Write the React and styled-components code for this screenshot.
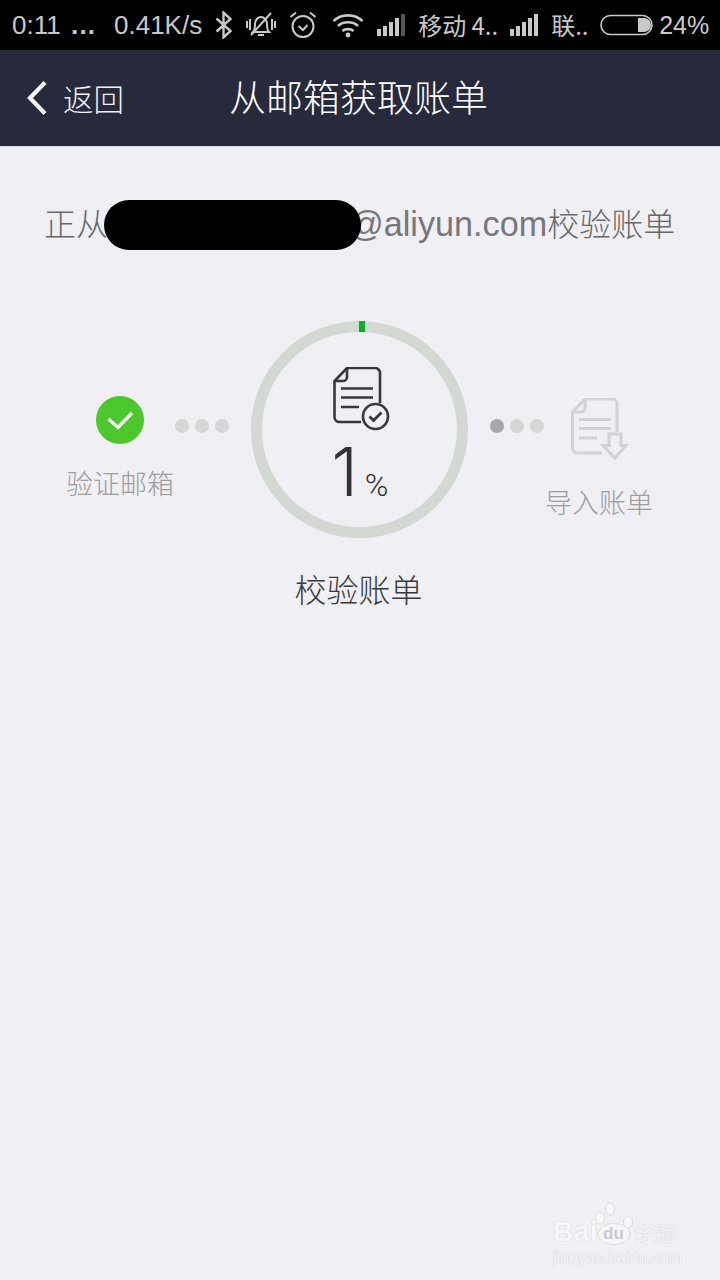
import React from "react";
import styled, { createGlobalStyle } from "styled-components";

const CJK = `"Noto Sans CJK SC", "Liberation Sans", sans-serif`;
const LATIN = `"Liberation Sans", "Noto Sans CJK SC", sans-serif`;

const Global = createGlobalStyle`
  html, body { margin: 0; padding: 0; background: #efeff4; }
  * { box-sizing: border-box; }
`;

const Page = styled.div`
  position: relative;
  width: 720px;
  height: 1280px;
  overflow: hidden;
  background: #efeff4;
  display: flex;
  flex-direction: column;
`;

const StatusBar = styled.div`
  height: 50px;
  background: #000;
  color: #c9c9c9;
  display: flex;
  align-items: center;
  padding-left: 12px;
  font: 26px/50px ${LATIN};
  white-space: nowrap;
`;

const StatusItem = styled.span`
  display: flex;
  align-items: center;
  margin-left: ${(p) => p.$gap || 0}px;
  width: ${(p) => (p.$w ? `${p.$w}px` : "auto")};
  font-family: ${(p) => (p.$cjk ? CJK : LATIN)};
  font-size: ${(p) => p.$size || 26}px;
  line-height: ${(p) => (p.$cjk ? 46 : 50)}px;
  height: 50px;
`;

const MoreDots = styled(StatusItem)`
  font-weight: 700;
  letter-spacing: 1.2px;
`;

const NavBar = styled.div`
  height: 97px;
  background: #272a3c;
  border-bottom: 1px solid #dcdce0;
  display: grid;
  grid-template-columns: 1fr auto 1fr;
  align-items: center;
  color: #fff;
  font-family: ${CJK};
  font-weight: 300;
`;

const Back = styled.div`
  display: flex;
  align-items: center;
  gap: 15px;
  padding-left: 26px;
  font-size: 30.5px;
  line-height: 44px;
  color: #f0f0f0;
`;

const Title = styled.div`
  font-size: 37px;
  line-height: 50px;
  margin: 0 3px 4px 0;
`;

const Message = styled.div`
  position: relative;
  margin: 52px 0 0 44px;
  height: 50px;
  font: 32px/46px ${CJK};
  font-weight: 300;
  color: #69696c;
  white-space: nowrap;
  display: flex;
`;

const Latin = styled.span`
  font-family: ${LATIN};
  font-size: 34.2px;
  line-height: 50px;
  color: #77777a;
`;

const Hidden = styled.span`
  display: block;
  width: 241px;
`;

const Redaction = styled.div`
  position: absolute;
  left: 60px;
  top: 1px;
  width: 257px;
  height: 50px;
  border-radius: 25px;
  background: #000;
`;

const Stepper = styled.div`
  margin-top: 72px;
  display: flex;
  align-items: flex-start;
  height: 290px;
`;

const Step = styled.div`
  width: 108px;
  margin-left: ${(p) => p.$left}px;
  padding-top: ${(p) => p.$top}px;
  display: flex;
  flex-direction: column;
  align-items: center;
`;

const StepLabel = styled.div`
  font: 300 27px/40px ${CJK};
  color: #9d9d9f;
  margin-top: ${(p) => p.$top}px;
  white-space: nowrap;
`;

const Dots = styled.div`
  display: flex;
  gap: 6px;
  margin-top: 98px;
  margin-left: ${(p) => p.$left}px;
`;

const Dot = styled.span`
  width: 14px;
  height: 14px;
  border-radius: 50%;
  background: ${(p) => (p.$on ? "#a8a8a8" : "#d6d6d8")};
`;

const Center = styled.div`
  width: 217px;
  margin-left: ${(p) => p.$left}px;
  display: flex;
  flex-direction: column;
  align-items: center;
`;

const Ring = styled.div`
  position: relative;
  width: 217px;
  height: 217px;
  border: 11px solid #d3d8d2;
  border-radius: 50%;
  display: flex;
  flex-direction: column;
  align-items: center;
  padding: 35px 0 0 3px;
`;

const Tick = styled.span`
  position: absolute;
  left: 97px;
  top: -11px;
  width: 6px;
  height: 11px;
  background: #0db02b;
`;

const Percent = styled.div`
  display: flex;
  align-items: baseline;
  color: #333;
  height: 74px;
  margin-top: 4px;
  padding-right: 2px;
`;

const Big = styled.span`
  font: 300 67px/74px Inter, Roboto, sans-serif;
`;

const Small = styled.span`
  font: 300 32px/40px Roboto, "Liberation Sans", sans-serif;
  margin-left: 7px;
`;

const CenterLabel = styled.div`
  font: 300 32px/50px ${CJK};
  color: #3a3a3c;
  margin: 25px 2px 0 0;
`;

const Watermark = styled.div`
  position: absolute;
  left: 553px;
  top: 1203px;
  width: 130px;
  height: 62px;
  color: #f7f7fa;
  text-shadow: 0 0 1px #cfcfd3, 0 0 1px #cfcfd3;
`;

const WmBai = styled.span`
  position: absolute;
  left: 0;
  top: 13px;
  font: 700 28px/32px ${LATIN};
  letter-spacing: 0.5px;
`;

const WmPaw = styled.svg`
  position: absolute;
  left: 42px;
  top: 0;
`;

const WmDu = styled.span`
  position: absolute;
  left: 50px;
  top: 21px;
  font: 700 17px/20px ${LATIN};
  color: #c9c9cd;
  text-shadow: none;
`;

const WmJing = styled.span`
  position: absolute;
  left: 82px;
  top: 16px;
  font: 400 21px/26px ${CJK};
`;

const WmUrl = styled.span`
  position: absolute;
  left: 0;
  top: 45px;
  font: 400 16px/20px ${LATIN};
  white-space: nowrap;
`;

const Signal = ({ dim }) => (
  <svg width="29" height="24" viewBox="0 0 29 24" fill="#c9c9c9">
    <rect x="0" y="16" width="4" height="7" />
    <rect x="6" y="13" width="4" height="10" />
    <rect x="12" y="9" width="4" height="14" />
    <rect x="18" y="5" width="4" height="18" />
    <rect x="24" y="1" width="4" height="22" fill={dim ? "#555" : "#c9c9c9"} />
  </svg>
);

const StatusIcons = {
  Bluetooth: () => (
    <svg width="18" height="28" viewBox="0 0 18 28" fill="none" stroke="#c9c9c9" strokeWidth="2.4">
      <path d="M1.5 7.5 L15.5 20 L8.5 26.5 V1.5 L15.5 8 L1.5 20.5" />
    </svg>
  ),
  Mute: () => (
    <svg width="30" height="28" viewBox="0 0 30 28" fill="none" stroke="#c9c9c9" strokeWidth="2">
      <path d="M7 21 c2-2 2-4 2-8 c0-4 3-7 6-7 c3 0 6 3 6 7 c0 4 0 6 2 8 z" />
      <path d="M12 24 h6" />
      <path d="M5 24 L25 2" />
      <path d="M1 10 v7 M4 8 v11 M26 8 v11 M29 10 v7" />
    </svg>
  ),
  Alarm: () => (
    <svg width="28" height="28" viewBox="0 0 28 28" fill="none" stroke="#c9c9c9" strokeWidth="2">
      <circle cx="14" cy="15.5" r="10.5" />
      <path d="M9.5 15 l4.5 4 l4.5-5" />
      <path d="M1.5 6 L7 1.5 M26.5 6 L21 1.5" />
    </svg>
  ),
  Wifi: () => (
    <svg width="32" height="26" viewBox="0 0 32 26" fill="none" stroke="#c9c9c9" strokeWidth="2.6">
      <path d="M1.5 9 C9 1.5 23 1.5 30.5 9" />
      <path d="M6 14 C11 9 21 9 26 14" />
      <path d="M10.5 19 C13 16.5 19 16.5 21.5 19" />
      <circle cx="16" cy="23" r="2.4" fill="#c9c9c9" stroke="none" />
    </svg>
  ),
  Battery: () => (
    <svg width="53" height="22" viewBox="0 0 53 22" fill="none">
      <rect x="1" y="1.5" width="51" height="19" rx="9.5" stroke="#c9c9c9" strokeWidth="1.6" />
      <path d="M38 4 h6 a7 7 0 0 1 0 14 h-6 z" fill="#c9c9c9" />
    </svg>
  ),
};

const DocIcon = () => (
  <svg width="57" height="64" viewBox="0 0 57 64" fill="none" stroke="#38383a" strokeWidth="2.6">
    <path d="M47 36 V6 a5 5 0 0 0 -5 -5 H14 L1.5 14 V50 a5 5 0 0 0 5 5 H28" />
    <path d="M14 1 V10 a4 4 0 0 1 -4 4 H1.5" />
    <path d="M8 21.5 H40 M8 30.5 H40 M8 40 H26" />
    <circle cx="42.5" cy="49.5" r="12.5" />
    <path d="M36.5 49.5 l4 4 l8 -8" strokeWidth="2.8" />
  </svg>
);

const ImportIcon = () => (
  <svg width="57" height="62" viewBox="0 0 57 62" fill="none" stroke="#d2d2d4" strokeWidth="3">
    <path d="M46 34 V6 a5 5 0 0 0 -5 -5 H14 L1.5 14 V50 a5 5 0 0 0 5 5 H31" />
    <path d="M14 1 V10 a4 4 0 0 1 -4 4 H1.5" />
    <path d="M8 21.5 H40 M8 30.5 H40 M8 40 H26" />
    <path d="M38 36 H50 V47.5 H55 L44 60 L32 47.5 H38 Z" />
  </svg>
);

const CheckBadge = () => (
  <svg width="48" height="48" viewBox="0 0 48 48">
    <circle cx="24" cy="24" r="24" fill="#4dc72e" />
    <path d="M12.5 23 L22 31.5 L36 17" fill="none" stroke="#f2f5ee" strokeWidth="3.4" />
  </svg>
);

export default function App() {
  return (
    <Page>
      <Global />
      <StatusBar>
        <StatusItem $w={47}>0:11</StatusItem>
        <MoreDots $gap={12} $w={43}>...</MoreDots>
        <StatusItem>0.41K/s</StatusItem>
        <StatusItem $gap={13}><StatusIcons.Bluetooth /></StatusItem>
        <StatusItem $gap={13}><StatusIcons.Mute /></StatusItem>
        <StatusItem $gap={13}><StatusIcons.Alarm /></StatusItem>
        <StatusItem $gap={15}><StatusIcons.Wifi /></StatusItem>
        <StatusItem $gap={13}><Signal dim /></StatusItem>
        <StatusItem $gap={12} $w={80} $cjk $size={24}>移动 4..</StatusItem>
        <StatusItem $gap={12}><Signal /></StatusItem>
        <StatusItem $gap={12} $w={37} $cjk $size={24}>联..</StatusItem>
        <StatusItem $gap={12}><StatusIcons.Battery /></StatusItem>
        <StatusItem $gap={6} $size={25}>24%</StatusItem>
      </StatusBar>
      <NavBar>
        <Back>
          <svg width="22" height="36" viewBox="0 0 22 36" fill="none" stroke="#f4f4f4" strokeWidth="4.2">
            <path d="M19 2.5 L4 18 L19 33.5" />
          </svg>
          返回
        </Back>
        <Title>从邮箱获取账单</Title>
        <span />
      </NavBar>
      <Message>
        正从<Hidden /><Latin>@aliyun.com</Latin>校验账单
        <Redaction />
      </Message>
      <Stepper>
        <Step $left={66} $top={75}>
          <CheckBadge />
          <StepLabel $top={19}>验证邮箱</StepLabel>
        </Step>
        <Dots $left={1}>
          <Dot /><Dot /><Dot />
        </Dots>
        <Center $left={22}>
          <Ring>
            <Tick />
            <DocIcon />
            <Percent>
              <Big>1</Big>
              <Small>%</Small>
            </Percent>
          </Ring>
          <CenterLabel>校验账单</CenterLabel>
        </Center>
        <Dots $left={22}>
          <Dot $on /><Dot /><Dot />
        </Dots>
        <Step $left={1} $top={77}>
          <ImportIcon />
          <StepLabel $top={22}>导入账单</StepLabel>
        </Step>
      </Stepper>
      <Watermark>
        <WmBai>Bai</WmBai>
        <WmPaw width="46" height="44" viewBox="0 0 46 44" fill="#f7f7fa" stroke="#dcdce0" strokeWidth="1">
          <ellipse cx="15" cy="6" rx="4.5" ry="6" />
          <ellipse cx="5" cy="15" rx="4.5" ry="6" />
          <ellipse cx="33" cy="19" rx="4.5" ry="6" />
          <ellipse cx="19" cy="31" rx="16" ry="10.5" />
        </WmPaw>
        <WmDu>du</WmDu>
        <WmJing>经验</WmJing>
        <WmUrl>jingyan.baidu.com</WmUrl>
      </Watermark>
    </Page>
  );
}
